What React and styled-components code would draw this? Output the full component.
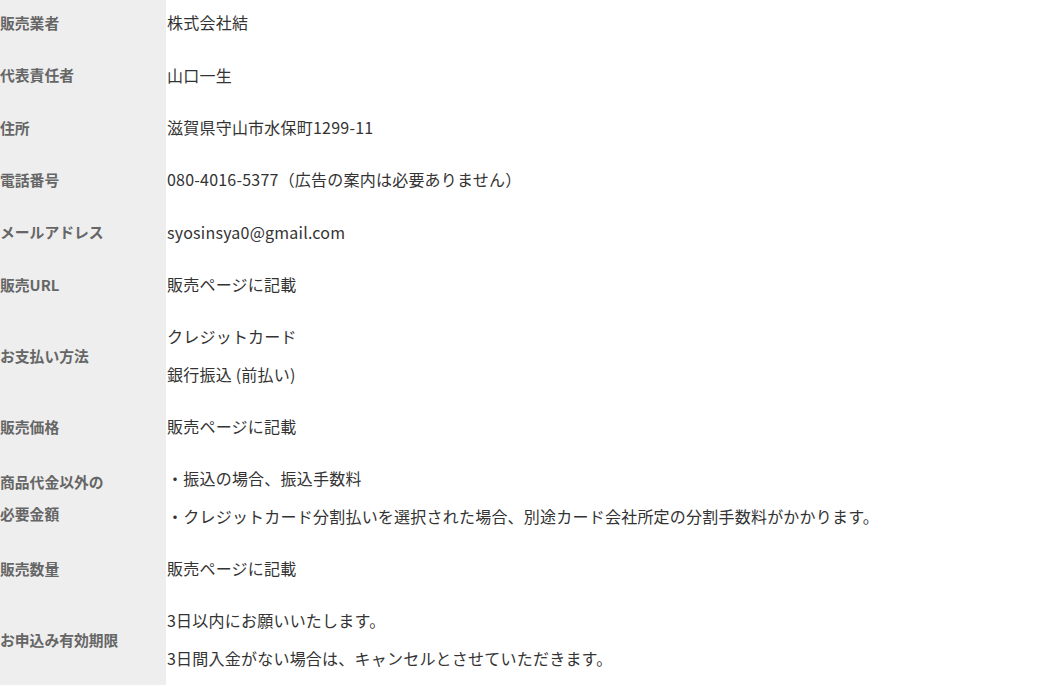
import React from 'react'
import styled, { createGlobalStyle } from 'styled-components'

const GlobalStyle = createGlobalStyle`
  html, body {
    margin: 0;
    padding: 0;
    background: #fff;
    overflow: hidden;
  }
  body {
    font-family: "Noto Sans CJK JP", "Noto Sans", sans-serif;
  }
`;

const rows = [
  { label: ['販売業者'], values: ['株式会社結'] },
  { label: ['代表責任者'], values: ['山口一生'] },
  { label: ['住所'], values: ['滋賀県守山市水保町1299-11'] },
  { label: ['電話番号'], values: ['080-4016-5377（広告の案内は必要ありません）'] },
  { label: ['メールアドレス'], values: ['syosinsya0@gmail.com'] },
  { label: ['販売URL'], values: ['販売ページに記載'] },
  { label: ['お支払い方法'], values: ['クレジットカード', '銀行振込 (前払い)'] },
  { label: ['販売価格'], values: ['販売ページに記載'] },
  {
    label: ['商品代金以外の', '必要金額'],
    values: [
      '・振込の場合、振込手数料',
      '・クレジットカード分割払いを選択された場合、別途カード会社所定の分割手数料がかかります。',
    ],
  },
  { label: ['販売数量'], values: ['販売ページに記載'] },
  {
    label: ['お申込み有効期限'],
    values: ['3日以内にお願いいたします。', '3日間入金がない場合は、キャンセルとさせていただきます。'],
  },
];

const App = () => {
  return (
    <>
      <GlobalStyle />
      <Table>
        <tbody>
          {rows.map((row, i) => (
            <tr key={i}>
              <Label>
                {row.label.map((l, j) => (
                  <span key={j}>
                    {l}
                    {j < row.label.length - 1 && <br />}
                  </span>
                ))}
              </Label>
              <Value>
                {row.values.map((v, j) => (
                  <p key={j}>{v}</p>
                ))}
              </Value>
            </tr>
          ))}
        </tbody>
      </Table>
    </>
  );
};

const Table = styled.table`
  width: 100%;
  border-collapse: collapse;
  border-spacing: 0;
  margin-top: -3px;
`;

const Label = styled.th`
  width: 166px;
  padding: 0;
  background-color: #eeeeee;
  color: #666;
  font-size: 14.8px;
  font-weight: 700;
  line-height: 32px;
  text-align: left;
  vertical-align: middle;
  white-space: nowrap;
`;

const Value = styled.td`
  padding: 7.4px 0 7.4px 1px;
  color: #333;
  font-size: 16px;
  letter-spacing: 0.22px;
  vertical-align: middle;
  p {
    margin: 0;
    line-height: 37.5px;
  }
`;

export default App;
